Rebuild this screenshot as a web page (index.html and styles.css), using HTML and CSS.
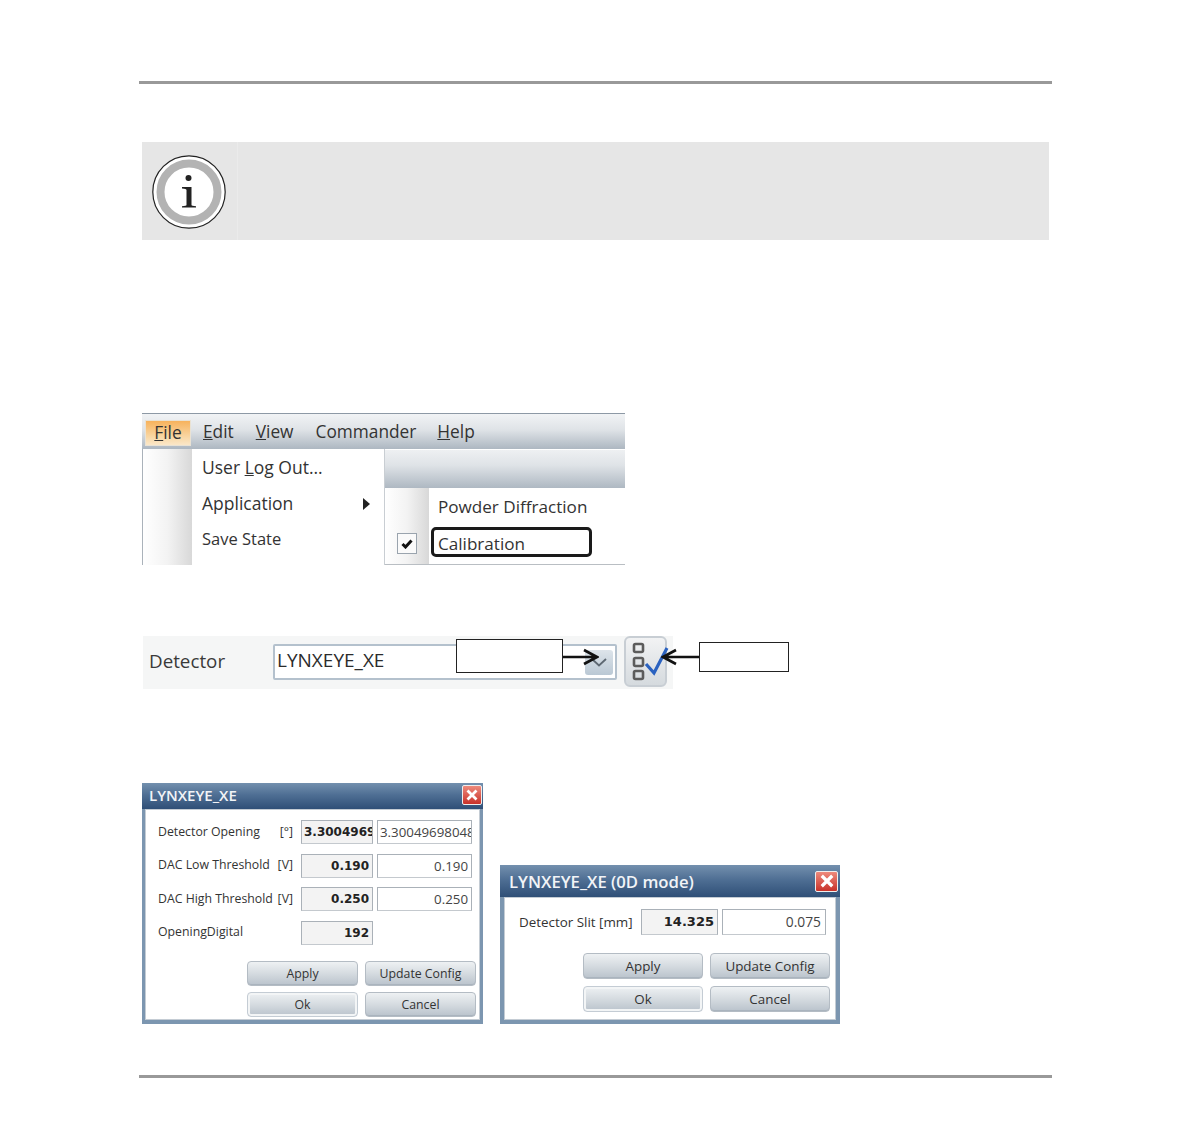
FILE: index.html
```html
<!DOCTYPE html>
<html lang="en">
<head>
<meta charset="utf-8">
<title>LYNXEYE_XE detector settings</title>
<link rel="stylesheet" href="styles.css">
</head>
<body>
<main class="page">
  <hr class="rule rule-top">

  <section class="note">
    <div class="note-icon">
      <svg width="76" height="76" viewBox="0 0 76 76" aria-hidden="true">
        <circle cx="38" cy="38" r="36.2" fill="#fff" stroke="#222" stroke-width="1.2"/>
        <circle cx="38" cy="38" r="28.500" fill="#fff" stroke="#b3b3b3" stroke-width="8"/>
        <circle cx="37.500" cy="24" r="3" fill="#222"/>
        <path d="M31 33H40.500V51Q40.500 52 45 52.200V53.500H31V52.200Q35.500 52 35.500 51V36Q35.500 34.600 31 34.400Z" fill="#222"/>
      </svg>
    </div>
  </section>

  <figure class="menu-shot">
    <div class="menubar">
      <span class="menu-title menu-file"><u>F</u>ile</span>
      <span class="menu-title menu-edit"><u>E</u>dit</span>
      <span class="menu-title menu-view"><u>V</u>iew</span>
      <span class="menu-title menu-commander">Commander</span>
      <span class="menu-title"><u>H</u>elp</span>
    </div>
    <div class="menu-panes">
      <div class="pane pane-main">
        <div class="pane-gutter pane-gutter-main"></div>
        <div class="pane-items">
          <div class="pane-item"><span>User <u>L</u>og Out...</span></div>
          <div class="pane-item pane-item-sub"><span>Application</span><span class="sub-arrow"></span></div>
          <div class="pane-item pane-item-save"><span>Save State</span></div>
        </div>
      </div>
      <div class="pane-side">
        <div class="side-head"></div>
        <div class="pane pane-sub">
          <div class="pane-gutter pane-gutter-sub">
            <span class="checkbox">
              <svg width="12" height="10" viewBox="0 0 12 10" aria-hidden="true"><path d="M1.500 5L4.500 8L10.500 1.500" fill="none" stroke="#111" stroke-width="3"/></svg>
            </span>
          </div>
          <div class="pane-items pane-items-sub">
            <div class="sub-item">Powder Diffraction</div>
            <div class="sub-item sub-item-marked">Calibration</div>
          </div>
        </div>
      </div>
    </div>
  </figure>

  <figure class="detector-shot">
    <span class="detector-label">Detector</span>
    <div class="combo">
      <span class="combo-value">LYNXEYE_XE</span>
      <span class="combo-button">
        <svg width="16" height="9" viewBox="0 0 16 9" aria-hidden="true"><path d="M1 1L8 7.500L15 1" fill="none" stroke="#5d6872" stroke-width="1.800"/></svg>
      </span>
    </div>
    <span class="tool-button">
      <svg width="44" height="48" viewBox="0 0 44 48" aria-hidden="true">
        <g fill="none" stroke="#5c5c5c" stroke-width="2.600">
          <rect x="9" y="7" width="9" height="8" rx="1.500"/>
          <rect x="9" y="21" width="9" height="8" rx="1.500"/>
          <rect x="9" y="34" width="9" height="8" rx="1.500"/>
        </g>
        <path d="M21 27L29 36L42 11" fill="none" stroke="#2a62c0" stroke-width="3.200"/>
      </svg>
    </span>
    <span class="callout callout-left"></span>
    <svg class="pointer pointer-left" width="36" height="18" viewBox="0 0 36 18" aria-hidden="true">
      <path d="M0 9H33M21 2L34 9L21 16" fill="none" stroke="#111" stroke-width="2.600"/>
    </svg>
    <span class="callout callout-right"></span>
    <svg class="pointer pointer-right" width="38" height="18" viewBox="0 0 38 18" aria-hidden="true">
      <path d="M38 9H3M15 2L2 9L15 16" fill="none" stroke="#111" stroke-width="2.600"/>
    </svg>
  </figure>

  <div class="dialogs">
    <section class="dialog dialog-large">
      <header class="dialog-title">
        <span>LYNXEYE_XE</span>
        <span class="dialog-close"><svg width="12" height="12" viewBox="0 0 12 12" aria-hidden="true"><path d="M1.500 1.500L10.500 10.500M10.500 1.500L1.500 10.500" stroke="#fff" stroke-width="2.800"/></svg></span>
      </header>
      <div class="dialog-body">
        <div class="fields">
          <span class="field-label"><span>Detector Opening</span><span>[°]</span></span>
          <span class="field field-read field-clip">3.3004969</span>
          <span class="field field-edit field-clip">3.30049698048</span>
          <span class="field-label"><span>DAC Low Threshold</span><span>[V]</span></span>
          <span class="field field-read">0.190</span>
          <span class="field field-edit">0.190</span>
          <span class="field-label"><span>DAC High Threshold</span><span>[V]</span></span>
          <span class="field field-read">0.250</span>
          <span class="field field-edit">0.250</span>
          <span class="field-label">OpeningDigital</span>
          <span class="field field-read">192</span>
        </div>
        <div class="buttons">
          <span class="btn">Apply</span>
          <span class="btn">Update Config</span>
          <span class="btn btn-default">Ok</span>
          <span class="btn">Cancel</span>
        </div>
      </div>
    </section>

    <section class="dialog dialog-small">
      <header class="dialog-title">
        <span>LYNXEYE_XE (0D mode)</span>
        <span class="dialog-close"><svg width="14" height="14" viewBox="0 0 12 12" aria-hidden="true"><path d="M1.500 1.500L10.500 10.500M10.500 1.500L1.500 10.500" stroke="#fff" stroke-width="2.800"/></svg></span>
      </header>
      <div class="dialog-body">
        <div class="fields">
          <span class="field-label">Detector Slit [mm]</span>
          <span class="field field-read">14.325</span>
          <span class="field field-edit">0.075</span>
        </div>
        <div class="buttons">
          <span class="btn">Apply</span>
          <span class="btn">Update Config</span>
          <span class="btn btn-default">Ok</span>
          <span class="btn">Cancel</span>
        </div>
      </div>
    </section>
  </div>

  <hr class="rule rule-bottom">
</main>
</body>
</html>
```

FILE: styles.css
```css
* { box-sizing: border-box; }
html, body { margin: 0; padding: 0; background: #fff; }
body { font-family: "Open Sans", "Liberation Sans", sans-serif; color: #222; }
figure { margin: 0; }

.page { width: 1190px; height: 1134px; padding: 81px 138px 0 139px; display: flex; flex-direction: column; }

.rule { margin: 0; border: 0; height: 3px; background: #999; width: 913px; flex: none; }
.rule-bottom { margin-top: 51px; }

.note { margin: 58px 0 0 3px; width: 907px; height: 98px; background: #e6e6e6; flex: none; }
.note-icon { width: 96px; height: 98px; padding: 12px 0 0 9px; border-right: 1px solid #ebebeb; }
.note-icon svg { display: block; }

/* menu */
.menu-shot { margin: 173px 0 0 3px; width: 483px; height: 152px; flex: none; overflow: hidden; border-top: 1px solid #8d99a5; }
.menubar { height: 35px; display: flex; align-items: center; padding: 2px 0 0 3px; background: linear-gradient(#f1f3f5, #dfe3e7 45%, #adb7c1); font-size: 17.300px; color: #333; }
.menu-title { margin-right: 21px; padding-bottom: 3px; white-space: nowrap; }
.menu-file { width: 46px; height: 26px; margin-right: 12px; padding: 0; text-align: center; line-height: 23px; background: linear-gradient(#f7b25c, #f9d9a8 70%, #fbe7c8); border: 1px solid #e9e2d4; }
.menu-edit { margin-right: 22px; }
.menu-view { margin-right: 22px; }
.menu-commander { margin-right: 21px; }
.menu-panes { display: flex; height: 116px; }
.pane { display: flex; background: #fff; }
.pane-main { width: 243px; border-left: 1px solid #aab2ba; border-right: 1px solid #c9ced3; }
.pane-gutter { flex: none; background: linear-gradient(90deg, #fff, #f3f3f3 50%, #d8d8d8); }
.pane-gutter-main { width: 49px; }
.pane-items { padding: 0 0 0 10px; font-size: 17.500px; color: #333; flex: 1; }
.pane-item { height: 36px; line-height: 36px; display: flex; align-items: center; white-space: nowrap; }
.pane-item-sub { position: relative; }
.pane-item-save { font-size: 16.500px; }
.sub-arrow { position: absolute; left: 161px; top: 13px; border-left: 7px solid #222; border-top: 6px solid transparent; border-bottom: 6px solid transparent; }

.pane-side { width: 240px; display: flex; flex-direction: column; }
.side-head { height: 39px; flex: none; background: linear-gradient(#eef0f2, #dfe3e7 40%, #aeb8c2); border-top: 1px solid #fff; }
.pane-sub { flex: 1; border-bottom: 1px solid #b9bec3; }
.pane-gutter-sub { width: 44px; padding: 45px 0 0 12px; }
.checkbox { width: 20px; height: 21px; display: flex; align-items: center; justify-content: center; background: #fafafa; border: 1px solid #9aa4ae; }
.pane-items-sub { padding: 0 0 0 9px; font-size: 17.100px; }
.sub-item { height: 37px; line-height: 37px; white-space: nowrap; }
.sub-item-marked { position: relative; }
.sub-item-marked::before { content: ""; position: absolute; box-sizing: border-box; left: -7px; top: 2px; width: 161px; height: 30px; border: 3px solid #1a1a1a; border-radius: 5px; }

/* detector */
.detector-shot { position: relative; margin: 71px 0 0 4px; width: 530px; height: 53px; flex: none; display: flex; align-items: flex-start; background: #f5f6f6; }
.detector-label { width: 130px; padding: 12px 0 0 6px; font-size: 18.800px; color: #3a3a3a; }
.combo { margin-top: 8px; width: 344px; height: 36px; display: flex; align-items: center; justify-content: space-between; padding: 0 2px 0 2px; background: #fff; border: 2px solid #b4c1cd; border-radius: 2px; }
.combo-value { font-size: 19px; color: #2b2b2b; padding-bottom: 4px; }
.combo-button { width: 28px; height: 25px; display: flex; align-items: center; justify-content: center; background: linear-gradient(#dde4ea, #bac8d4); border-radius: 3px; }
.tool-button { margin-left: 7px; width: 43px; height: 51px; border: 2px solid #c8ced4; border-radius: 6px; background: linear-gradient(#f2f3f4, #d5dade); }
.tool-button svg { display: block; margin: -1px 0 0 -1px; }
.callout { position: absolute; background: #fff; border: 1px solid #222; }
.callout-left { left: 313px; top: 3px; width: 107px; height: 34px; }
.callout-right { left: 556px; top: 6px; width: 90px; height: 30px; }
.pointer { position: absolute; }
.pointer-left { left: 420px; top: 12px; }
.pointer-right { left: 518px; top: 12px; }

/* dialogs */
.dialogs { margin-top: 94px; margin-left: 3px; display: flex; align-items: flex-end; gap: 17px; height: 241px; flex: none; }
.dialog { display: flex; flex-direction: column; background: #7c96b0; flex: none; }
.dialog-title { display: flex; justify-content: space-between; align-items: center; color: #f2f4f7; font-weight: 600; background: linear-gradient(#7390ae, #4f6f94 45%, #2f4f77); flex: none; }
.dialog-close { display: flex; align-items: center; justify-content: center; background: linear-gradient(#ee8a7c, #c8322a); border: 1px solid #eee; border-radius: 2px; }
.dialog-body { flex: 1; background: #fff; border: 1px solid #c4ccd4; color: #333; }
.fields { display: grid; align-items: center; }
.field-label { display: flex; justify-content: space-between; white-space: nowrap; padding-right: 4px; padding-bottom: 2px; }
.field { display: block; text-align: right; white-space: nowrap; overflow: hidden; border: 1px solid #aab1b8; border-bottom-color: #c4c9ce; }
.field-read { font-family: "DejaVu Sans", sans-serif; font-weight: 700; background: #f3f3f3; color: #222; }
.field-edit { background: #fff; color: #444; }
.field-clip { text-align: left; }
.buttons { display: grid; justify-content: end; }
.btn { display: flex; align-items: center; justify-content: center; border: 1px solid #b4bcc4; border-radius: 4px; background: linear-gradient(#eef1f3, #d5dbe0 50%, #bac3cc); color: #333; box-shadow: inset 0 -1px 0 #aab4be; }
.btn-default { border-color: #c4ccd4; box-shadow: inset 0 0 0 2px #f3f5f6; }

.dialog-large { width: 341px; height: 241px; padding: 0 3px 4px; }
.dialog-large .dialog-title { height: 26px; margin: 0 -3px; padding: 0 1px 2px 7px; font-size: 15px; }
.dialog-large .dialog-close { width: 20px; height: 20px; }
.dialog-large .dialog-body { padding: 10px 0 0 12px; font-size: 12.300px; }
.dialog-large .fields { grid-template-columns: 139px 72px 95px; column-gap: 4px; row-gap: 9.500px; grid-auto-rows: 24px; }
.dialog-large .field { height: 24px; line-height: 22px; padding-right: 3px; font-size: 13.300px; }
.dialog-large .field-read { font-size: 12px; }
.dialog-large .field-clip { padding: 0 0 0 2px; }
.dialog-large .buttons { margin-top: 16px; grid-template-columns: 111px 111px; column-gap: 7px; row-gap: 6px; grid-auto-rows: 25px; padding-right: 3px; }

.dialog-small { width: 340px; height: 159px; padding: 0 4px 4px; }
.dialog-small .dialog-title { height: 32px; margin: 0 -4px; padding: 0 2px 0 9px; font-size: 16.700px; }
.dialog-small .dialog-close { width: 23px; height: 21px; }
.dialog-small .dialog-body { padding: 11px 0 0 14px; font-size: 13.400px; }
.dialog-small .fields { grid-template-columns: 118px 77px 104px; column-gap: 4px; grid-auto-rows: 26px; }
.dialog-small .field-label { padding: 0; }
.dialog-small .field { height: 26px; line-height: 24px; padding-right: 4px; font-size: 13.800px; }
.dialog-small .field-read { font-size: 13px; padding-right: 3px; }
.dialog-small .buttons { margin-top: 18px; grid-template-columns: 120px 120px; column-gap: 7px; row-gap: 7px; grid-auto-rows: 26px; padding-right: 5px; }
```
